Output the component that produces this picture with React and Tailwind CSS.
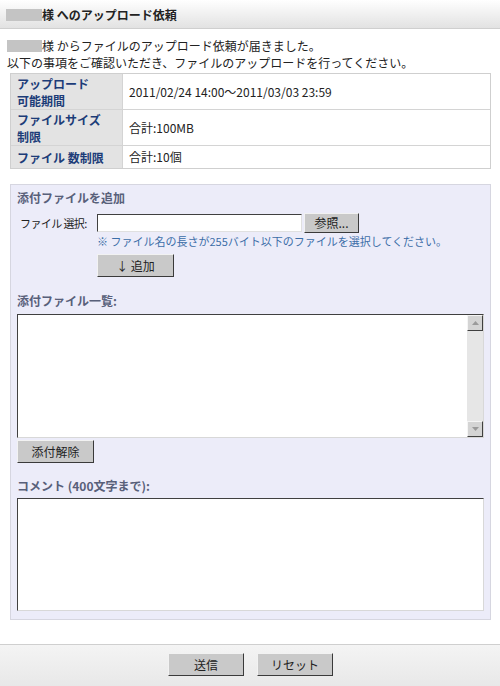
import React from 'react';

const font = { fontFamily: '"Noto Sans CJK JP", "Liberation Sans", sans-serif' };

const Btn = ({ children, className = 'h-[23px]' }) => (
    <button
        type="button"
        className={`bg-[#c9c9c9] border border-t-[#f2f2f2] border-l-[#f2f2f2] border-r-[#3a3a3a] border-b-[#3a3a3a] text-[12px] leading-none text-[#222] ${className}`}
    >
        {children}
    </button>
);

const Row = ({ label, value, h }) => (
    <div className={`flex border-b border-[#d4d4d4] last:border-b-0 ${h}`}>
        <div className="w-[112px] shrink-0 bg-[#e3e3e3] border-r border-[#d4d4d4] px-[6px] flex items-center text-[12px] leading-[17px] font-bold text-[#1c3c78]">
            {label}
        </div>
        <div className="flex-1 bg-white px-[6px] flex items-center text-[12px] text-[#222]">{value}</div>
    </div>
);

export default function App() {
    return (
        <div className="w-[500px] h-[686px] bg-white flex flex-col text-[#222]" style={font}>
            <div className="h-[29px] shrink-0 bg-gradient-to-b from-white to-[#e2e2e2] border-b border-[#cfcfcf] flex items-center pl-[6px] pt-[1px]">
                <span className="inline-block w-[36px] h-[12px] bg-[#c4c4c4]" />
                <span className="text-[12px] font-bold text-[#222]">様 へのアップロード依頼</span>
            </div>

            <div className="px-[7px] pt-[8px] text-[12px] leading-[17px]">
                <div className="flex items-center">
                    <span className="inline-block w-[35px] h-[12px] bg-[#c4c4c4]" />
                    <span>様 からファイルのアップロード依頼が届きました。</span>
                </div>
                <div>以下の事項をご確認いただき、ファイルのアップロードを行ってください。</div>
            </div>

            <div className="mx-[10px] mt-[2px] w-[481px] border border-[#cfcfcf] flex flex-col">
                <Row
                    h="h-[36px]"
                    label={<span>アップロード<br />可能期間</span>}
                    value="2011/02/24 14:00〜2011/03/03 23:59"
                />
                <Row
                    h="h-[36px]"
                    label={<span>ファイルサイズ<br />制限</span>}
                    value="合計:100MB"
                />
                <Row h="h-[22px]" label="ファイル 数制限" value="合計:10個" />
            </div>

            <div className="mx-[10px] mt-[15px] w-[481px] h-[436px] bg-[#ececf9] border border-[#d6d6e0] px-[6px] pt-[5px]">
                <div className="text-[12px] font-bold text-[#58607a] leading-[16px]">添付ファイルを追加</div>
                <div className="flex mt-[7px]">
                    <div className="w-[80px] shrink-0 pl-[3px] pt-[5px] text-[11px] tracking-[-0.6px] leading-none whitespace-nowrap">ファイル 選択:</div>
                    <div className="flex flex-col">
                        <div className="flex items-center gap-[2px] h-[20px]">
                            <div className="w-[205px] h-[18px] bg-white border border-t-[#404040] border-l-[#404040] border-r-[#e0e0e0] border-b-[#e0e0e0]" />
                            <Btn className="w-[55px] h-[20px]">参照...</Btn>
                        </div>
                        <div className="text-[11px] leading-[14px] h-[14px] text-[#3c6ea8] mt-[1px] whitespace-nowrap">
                            ※ ファイル名の長さが255バイト以下のファイルを選択してください。
                        </div>
                        <Btn className="w-[77px] h-[23px] mt-[6px]">↓ 追加</Btn>
                    </div>
                </div>

                <div className="mt-[16px] text-[12px] font-bold text-[#58607a] leading-[16px]">添付ファイル一覧:</div>
                <div className="mt-[5px] w-[467px] h-[124px] bg-white border border-t-[#404040] border-l-[#404040] border-r-[#d8d8d8] border-b-[#d8d8d8] flex justify-end">
                    <div className="w-[16px] h-full bg-[#e6e6e6] flex flex-col justify-between">
                        <div className="h-[16px] bg-[#d4d4d4] border border-t-[#f5f5f5] border-l-[#f5f5f5] border-r-[#404040] border-b-[#404040] flex items-center justify-center">
                            <svg width="7" height="4" viewBox="0 0 7 4"><path d="M0 4 L3.5 0 L7 4 Z" fill="#9a9a9a" /></svg>
                        </div>
                        <div className="h-[16px] bg-[#d4d4d4] border border-t-[#f5f5f5] border-l-[#f5f5f5] border-r-[#404040] border-b-[#404040] flex items-center justify-center">
                            <svg width="7" height="4" viewBox="0 0 7 4"><path d="M0 0 L3.5 4 L7 0 Z" fill="#9a9a9a" /></svg>
                        </div>
                    </div>
                </div>
                <Btn className="w-[77px] h-[23px] mt-[2px] block">添付解除</Btn>

                <div className="mt-[15px] text-[12px] font-bold text-[#58607a] leading-[16px]">コメント (400文字まで):</div>
                <div className="mt-[4px] w-[467px] h-[113px] bg-white border border-t-[#404040] border-l-[#404040] border-r-[#d8d8d8] border-b-[#d8d8d8]" />
            </div>

            <div className="mt-auto h-[42px] shrink-0 bg-gradient-to-b from-[#f4f4f4] to-[#e8e8e8] border-t border-[#cfcfcf] flex items-start justify-center gap-[13px] pt-[8px] pl-[1px]">
                <Btn className="w-[76px] h-[23px]">送信</Btn>
                <Btn className="w-[76px] h-[23px]">リセット</Btn>
            </div>
        </div>
    );
}
